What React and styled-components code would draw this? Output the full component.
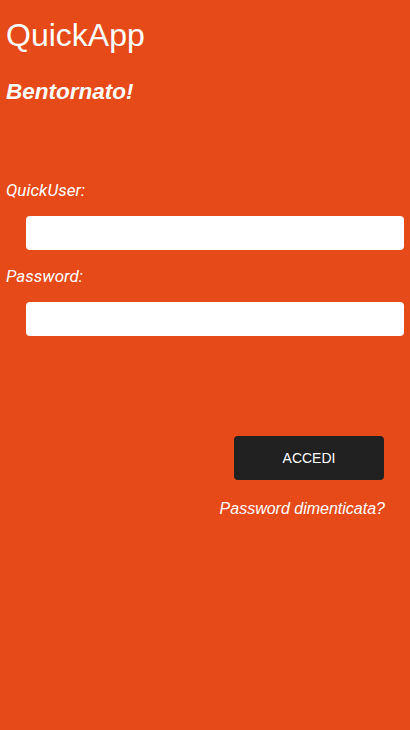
import styled, { createGlobalStyle } from "styled-components";

const GlobalStyle = createGlobalStyle`
  html, body {
    margin: 0;
    padding: 0;
    background-color: #e64a19;
  }
  body {
    font-family: "Liberation Sans", Arial, sans-serif;
    color: #fff;
  }
`;

const Page = styled.div`
  min-height: 730px;
  padding: 0 6px;
  box-sizing: border-box;
  display: flex;
  flex-direction: column;
`;

const Title = styled.h1`
  margin: 17px 0 0;
  font-size: 32px;
  line-height: 37px;
  font-weight: normal;
`;

const Subtitle = styled.h2`
  margin: 25px 0 0;
  font-size: 22.5px;
  line-height: 26px;
  font-weight: bold;
  font-style: italic;
`;

const Form = styled.form`
  display: flex;
  flex-direction: column;
  margin-top: 75px;
`;

const Label = styled.label`
  display: block;
  margin-top: ${(p) => (p.$first ? "0" : "16px")};
  font-family: Roboto, "Liberation Sans", sans-serif;
  font-style: italic;
  font-size: 17px;
  line-height: 20px;
`;

const Input = styled.input`
  display: block;
  margin: 16px 0 0 20px;
  height: 34px;
  box-sizing: border-box;
  border: none;
  border-radius: 4px;
  background: #fff;
  padding: 0 10px;
  font-size: 16px;
  outline: none;
`;

const Button = styled.button`
  align-self: flex-end;
  margin: 100px 20px 0 0;
  width: 150px;
  height: 44px;
  border: none;
  border-radius: 4px;
  background-color: #212121;
  color: #fff;
  font-family: "Liberation Sans", Arial, sans-serif;
  font-size: 14px;
  text-transform: uppercase;
  cursor: pointer;
`;

const ForgotLink = styled.a`
  align-self: flex-end;
  margin: 20px 19px 0 0;
  font-size: 16px;
  line-height: 18px;
  font-style: italic;
  color: #fff;
  text-decoration: none;
`;

export default function App() {
  return (
    <>
      <GlobalStyle />
      <Page>
        <Title>QuickApp</Title>
        <Subtitle>Bentornato!</Subtitle>
        <Form onSubmit={(e) => e.preventDefault()}>
          <Label $first htmlFor="user">QuickUser:</Label>
          <Input id="user" type="text" />
          <Label htmlFor="pass">Password:</Label>
          <Input id="pass" type="password" />
          <Button type="submit">Accedi</Button>
          <ForgotLink href="#">Password dimenticata?</ForgotLink>
        </Form>
      </Page>
    </>
  );
}
